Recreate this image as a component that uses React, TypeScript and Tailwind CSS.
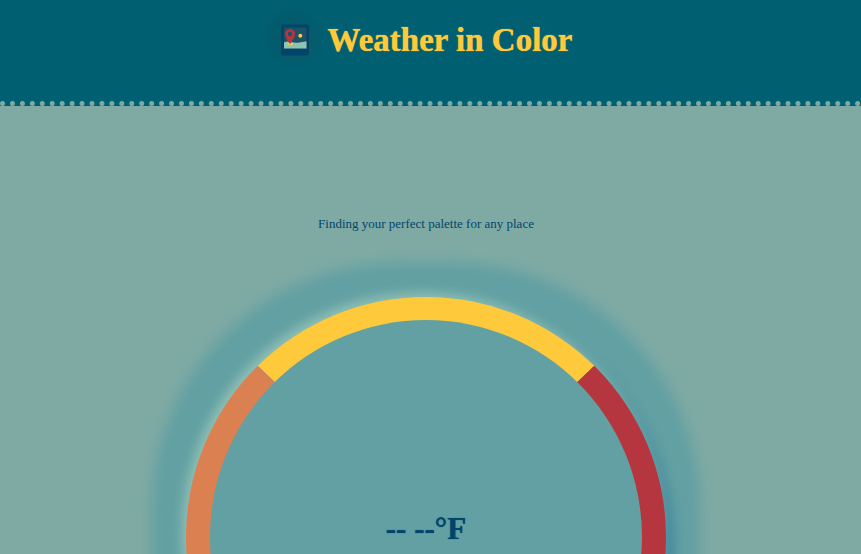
function MapLogo() {
  return (
    <span className="rounded-full bg-[#0c5b6a] shadow-[2px_2px_8px_2px_#0c5b6a,-4px_-4px_18px_6px_#045a6a]">
      <svg viewBox="0 0 32 32" className="size-8" role="img" aria-label="Weather map">
        <rect x="2" y="0.500" width="28" height="31" rx="2" fill="#02456a" />
        <rect x="5" y="3.500" width="22.500" height="21" fill="#1c5168" />
        <path d="M5 18.500c2-1.200 4-1.200 6-.8 4 .6 7 1.600 11 .6 2-.5 4-.8 5.500-.8v7H5z" fill="#8dc4b2" />
        <circle cx="21.300" cy="11.800" r="2" fill="#ffc93c" />
        <path d="M8.500 19.300h5.500v1.500H8.500z" fill="#ffc93c" />
        <path
          d="M11 5a5 5 0 0 0-5 5c0 3.500 5 10 5 10s5-6.500 5-10A5 5 0 0 0 11 5z"
          fill="#b5363e"
        />
        <circle cx="11" cy="10" r="2.200" fill="#1c5168" />
      </svg>
    </span>
  );
}

function Header() {
  return (
    <header className="flex h-[106px] items-start justify-center gap-4 border-b-5 border-dotted border-[#7faaa4] bg-[#006072] pt-5 pr-[9px]">
      <div className="flex h-10 items-center">
        <MapLogo />
      </div>
      <h1 className="text-[33px] leading-10 font-bold text-[#ffc93c] [text-shadow:0_0_1px_#ffc93c]">Weather in Color</h1>
    </header>
  );
}

function Dial() {
  return (
    <section className="mt-[43px] rounded-[232px] bg-[#62a0a3] p-5 shadow-[0_0_14px_14px_#62a0a3]">
      <div className="flex size-120 items-center justify-center rounded-full border-24 border-t-23 border-t-[#ffc93c] border-r-[#b5363e] border-b-[#02456a] border-l-[#db8051] bg-[#62a0a3] shadow-[-4px_-4px_12px_#94c2b6,6px_8px_14px_#38809a]">
        <p className="pb-4 text-[31px] leading-10 font-bold [text-shadow:0_0_1px_#02456a]">-- --°F</p>
      </div>
    </section>
  );
}

export default function App() {
  return (
    <div className="min-h-screen bg-[#7faaa4] font-['Liberation_Serif',serif] text-[#02456a]">
      <Header />
      <main className="flex flex-col items-center overflow-hidden pt-27 pr-[9px] pb-16">
        <p className="text-[13px] leading-5">Finding your perfect palette for any place</p>
        <Dial />
      </main>
    </div>
  );
}
